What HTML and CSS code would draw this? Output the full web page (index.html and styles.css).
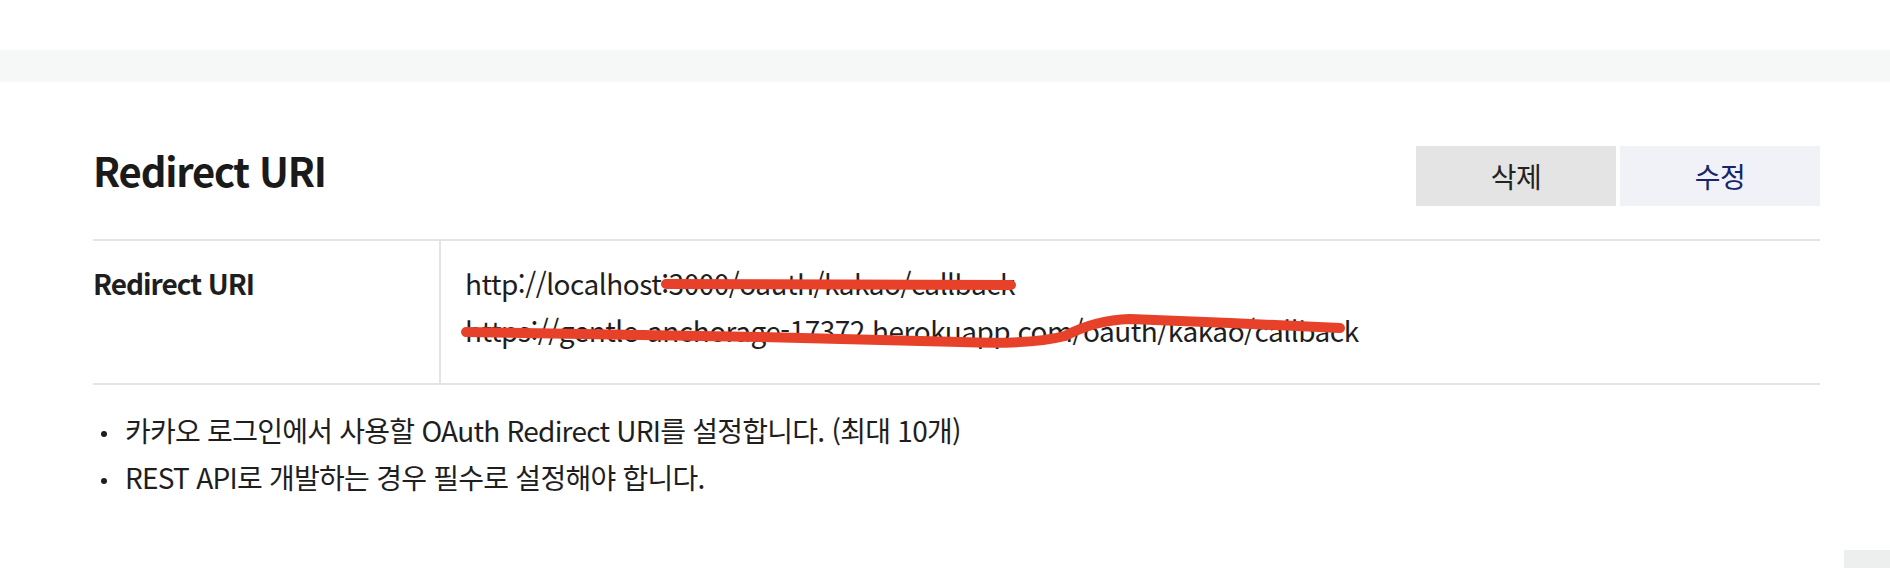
FILE: index.html
```html
<!DOCTYPE html>
<html lang="ko">
<head>
    <meta charset="UTF-8">
    <meta name="viewport" content="width=device-width, initial-scale=1.0">
    <title>Redirect URI</title>
    <link rel="stylesheet" href="styles.css">
</head>
<body>

<div class="top-band"></div>

<div class="section">
    <div class="section-head">
        <h2>Redirect URI</h2>
        <div class="actions">
            <button type="button" class="btn btn-delete">삭제</button>
            <button type="button" class="btn btn-edit">수정</button>
        </div>
    </div>

    <div class="info-table">
        <div class="info-label">Redirect URI</div>
        <div class="info-value">
            <p>http://localhost:3000/oauth/kakao/callback</p>
            <p>https://gentle-anchorage-17372.herokuapp.com/oauth/kakao/callback</p>
            <!-- red marker scribbles over the screenshot -->
            <svg class="scribble" viewBox="0 0 1379 142" preserveAspectRatio="none">
                <path d="M225,43 L570,44" />
                <path d="M25,91 L319,96 L519,101 Q589,104 624,95 Q654,79 689,78 L789,82 L899,87" />
            </svg>
        </div>
    </div>

    <ul class="notes">
        <li>카카오 로그인에서 사용할 OAuth Redirect URI를 설정합니다. (최대 10개)</li>
        <li>REST API로 개발하는 경우 필수로 설정해야 합니다.</li>
    </ul>
</div>

<div class="float-btn"></div>

</body>
</html>
```

FILE: styles.css
```css
body {
    margin: 0;
    font-family: "Noto Sans CJK KR", "Noto Sans", sans-serif;
    color: #1e1e1e;
    background-color: #fff;
    overflow: hidden;
}
.top-band {
    margin-top: 50px;
    height: 32px;
    background-color: #f6f7f7;
}
.section {
    padding: 64px 70px 0 93px;
}
.section-head {
    display: flex;
    justify-content: space-between;
    align-items: flex-start;
    height: 60px;
    margin-bottom: 33px;
}
.section-head h2 {
    margin: 0;
    font-size: 40px;
    line-height: 48px;
    font-weight: bold;
    letter-spacing: -1.2px;
    color: #1a1a1a;
}
.actions {
    display: flex;
    gap: 4px;
}
.btn {
    width: 200px;
    height: 60px;
    border: none;
    font-family: inherit;
    font-size: 28px;
    letter-spacing: -0.5px;
    cursor: pointer;
}
.btn-delete {
    background-color: #e4e4e4;
    color: #222;
}
.btn-edit {
    background-color: #f1f2f8;
    color: #16266a;
}
.info-table {
    display: flex;
    border-top: 2px solid #e4e4e4;
    border-bottom: 2px solid #e4e4e4;
}
.info-label {
    width: 346px;
    padding: 19px 0 29px;
    font-size: 28px;
    line-height: 47px;
    font-weight: bold;
    letter-spacing: -1px;
    border-right: 2px solid #e4e4e4;
}
.info-value {
    flex: 1;
    position: relative;
    padding: 19px 25px 29px 24px;
    font-size: 28px;
    line-height: 47px;
    letter-spacing: -0.5px;
}
.info-value p {
    margin: 0;
}
.scribble {
    position: absolute;
    left: 0;
    top: 0;
    width: 100%;
    height: 100%;
    overflow: visible;
}
.scribble path {
    fill: none;
    stroke: #e8412a;
    stroke-width: 10;
    stroke-linecap: round;
    stroke-linejoin: round;
}
.notes {
    list-style: none;
    margin: 22px 0 0;
    padding: 0;
}
.notes li {
    position: relative;
    padding-left: 32px;
    font-size: 28px;
    line-height: 47px;
    letter-spacing: -0.75px;
}
.notes li::before {
    content: "";
    position: absolute;
    left: 8px;
    top: 24px;
    width: 6px;
    height: 6px;
    border-radius: 50%;
    background-color: #1e1e1e;
}
.float-btn {
    position: fixed;
    right: 0;
    bottom: -30px;
    width: 46px;
    height: 48px;
    background-color: #edefee;
}
```
